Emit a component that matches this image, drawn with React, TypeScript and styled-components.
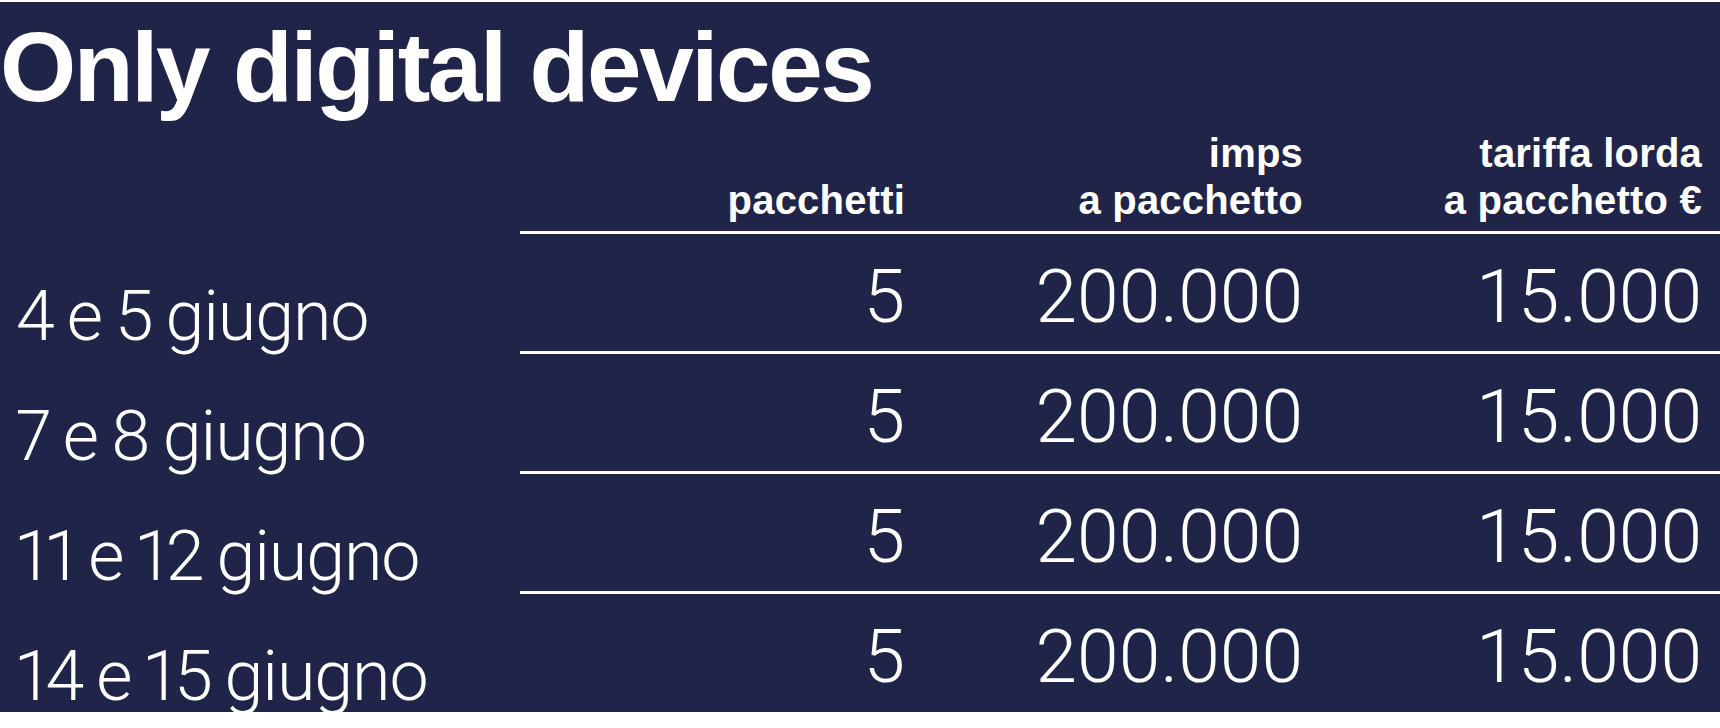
import React from "react";
import styled, { createGlobalStyle } from "styled-components";

type Slot = {
  date: string;
  packs: string;
  imps: string;
  price: string;
};

const slots: Slot[] = [
  { date: "4 e 5 giugno", packs: "5", imps: "200.000", price: "15.000" },
  { date: "7 e 8 giugno", packs: "5", imps: "200.000", price: "15.000" },
  { date: "11 e 12 giugno", packs: "5", imps: "200.000", price: "15.000" },
  { date: "14 e 15 giugno", packs: "5", imps: "200.000", price: "15.000" },
];

const App = () => {
  return (
    <>
      <GlobalStyle />
      <Page>
        <Panel>
          <Title>Only digital devices</Title>
          <HeadRow>
            <LabelSpacer />
            <HeadCells>
              <HeadCell>
                <br />
                pacchetti
              </HeadCell>
              <HeadCell>
                imps
                <br />a pacchetto
              </HeadCell>
              <HeadCell>
                tariffa lorda
                <br />a pacchetto €
              </HeadCell>
            </HeadCells>
          </HeadRow>
          {slots.map((slot) => (
            <Row key={slot.date}>
              <DateLabel>{slot.date}</DateLabel>
              <Cells>
                <Value>{slot.packs}</Value>
                <Value>{slot.imps}</Value>
                <Value>{slot.price}</Value>
              </Cells>
            </Row>
          ))}
        </Panel>
      </Page>
    </>
  );
};

export default App;

const GlobalStyle = createGlobalStyle`
  html, body {
    margin: 0;
    padding: 0;
    background: #ffffff;
  }
`;

const Page = styled.div`
  width: 1720px;
  height: 728px;
  padding-top: 2px;
  box-sizing: border-box;
  overflow: hidden;
`;

const Panel = styled.div`
  background: #1f2448;
  color: #ffffff;
  padding: 18px 0 1px;
`;

const Title = styled.h1`
  margin: 0;
  font-family: "Liberation Sans", Arial, sans-serif;
  font-weight: 700;
  font-size: 98px;
  line-height: 95px;
  letter-spacing: -2.4px;
`;

const HeadRow = styled.div`
  display: flex;
  margin-top: 15px;
`;

const LabelSpacer = styled.div`
  width: 520px;
  flex: none;
`;

const grid = `
  flex: 1;
  display: grid;
  grid-template-columns: 385px 398px 399px;
  padding-right: 16px;
`;

const HeadCells = styled.div`
  ${grid}
  padding-bottom: 7px;
`;

const HeadCell = styled.div`
  text-align: right;
  font-family: "Liberation Sans", Arial, sans-serif;
  font-weight: 700;
  font-size: 40px;
  line-height: 47px;
  letter-spacing: 0.2px;
`;

const Row = styled.div`
  display: flex;
  height: 120px;
`;

const DateLabel = styled.div`
  width: 520px;
  flex: none;
  box-sizing: border-box;
  padding: 53px 0 0 16px;
  font-family: Roboto, "Liberation Sans", sans-serif;
  font-weight: 300;
  font-size: 70px;
  line-height: 64px;
  letter-spacing: -1.1px;
  word-spacing: -3px;
  font-variant-numeric: proportional-nums;
  white-space: nowrap;
`;

const Cells = styled.div`
  ${grid}
  border-top: 3px solid #ffffff;
`;

const Value = styled.div`
  text-align: right;
  padding-top: 26px;
  font-family: Roboto, "Liberation Sans", sans-serif;
  font-weight: 300;
  font-size: 75px;
  line-height: 72px;
`;
